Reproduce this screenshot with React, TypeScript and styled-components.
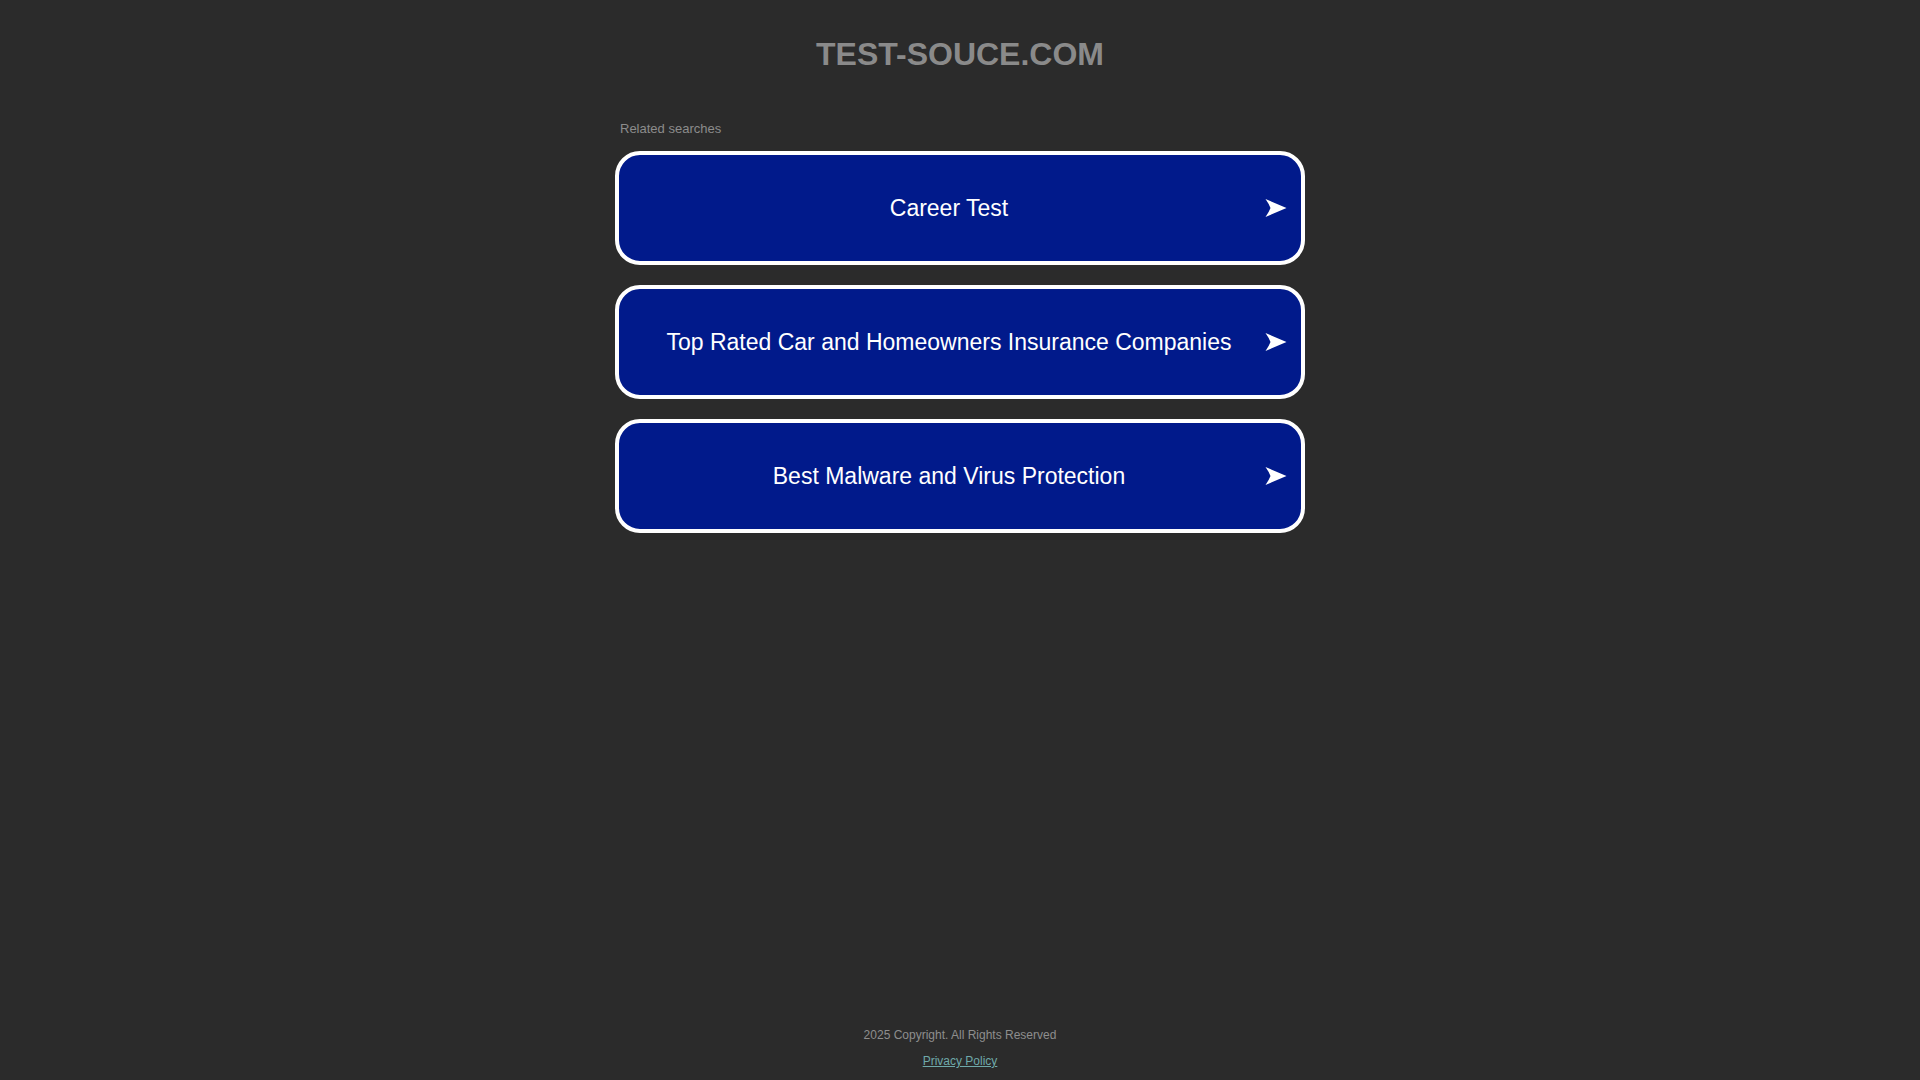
import React from "react";
import styled, {createGlobalStyle} from "styled-components";

const searches = [
    "Career Test",
    "Top Rated Car and Homeowners Insurance Companies",
    "Best Malware and Virus Protection",
];

const GlobalStyle = createGlobalStyle`
  html, body {
    margin: 0;
    padding: 0;
    background: #2b2b2b;
    font-family: "Liberation Sans", Arial, sans-serif;
  }
`;

const Arrow: React.FC = () => (
    <ArrowIcon viewBox="0 0 22 18" width={22} height={18}>
        <path d="M0.5 0 L21.5 9 L0.5 18 Q4 13 5.5 9 Q4 5 0.5 0 Z" fill="#ffffff"/>
    </ArrowIcon>
);

const App: React.FC = () => {
    return (
        <Page>
            <GlobalStyle/>
            <Title>TEST-SOUCE.COM</Title>
            <Content>
                <Label>Related searches</Label>
                <List>
                    {searches.map((s) => (
                        <SearchLink key={s} href="#">
                            <LinkText>{s}</LinkText>
                            <Arrow/>
                        </SearchLink>
                    ))}
                </List>
            </Content>
            <Footer>
                <Copyright>2025 Copyright. All Rights Reserved</Copyright>
                <Privacy href="#">Privacy Policy</Privacy>
            </Footer>
        </Page>
    );
}

export default App;

const Page = styled.div`
  display: flex;
  flex-direction: column;
  align-items: center;
  min-height: 100vh;
  box-sizing: border-box;
`;

const Title = styled.h1`
  margin: 36px 0 0;
  font-size: 32px;
  line-height: 36px;
  font-weight: bold;
  color: #8a8a8a;
  text-align: center;
`;

const Content = styled.div`
  width: 690px;
  margin-top: 49px;
  display: flex;
  flex-direction: column;
`;

const Label = styled.div`
  font-size: 13px;
  line-height: 15px;
  color: #8c8c8c;
  padding-left: 5px;
  margin-bottom: 15px;
`;

const List = styled.div`
  display: flex;
  flex-direction: column;
  gap: 20px;
`;

const SearchLink = styled.a`
  position: relative;
  display: flex;
  align-items: center;
  justify-content: center;
  box-sizing: border-box;
  height: 114px;
  padding: 0 44px 0 22px;
  border: 4px solid #ffffff;
  border-radius: 25px;
  background: #011a8b;
  color: #ffffff;
  text-decoration: none;
`;

const LinkText = styled.span`
  font-size: 23px;
  line-height: 26px;
  text-align: center;
`;

const ArrowIcon = styled.svg`
  position: absolute;
  right: 14px;
  top: 50%;
  margin-top: -9px;
`;

const Footer = styled.footer`
  margin-top: auto;
  display: flex;
  flex-direction: column;
  align-items: center;
  gap: 12px;
  padding-bottom: 12px;
  font-size: 12px;
  line-height: 14px;
`;

const Copyright = styled.div`
  color: #8e8e8e;
`;

const Privacy = styled.a`
  color: #6fa9aa;
  text-decoration: underline;
`;
